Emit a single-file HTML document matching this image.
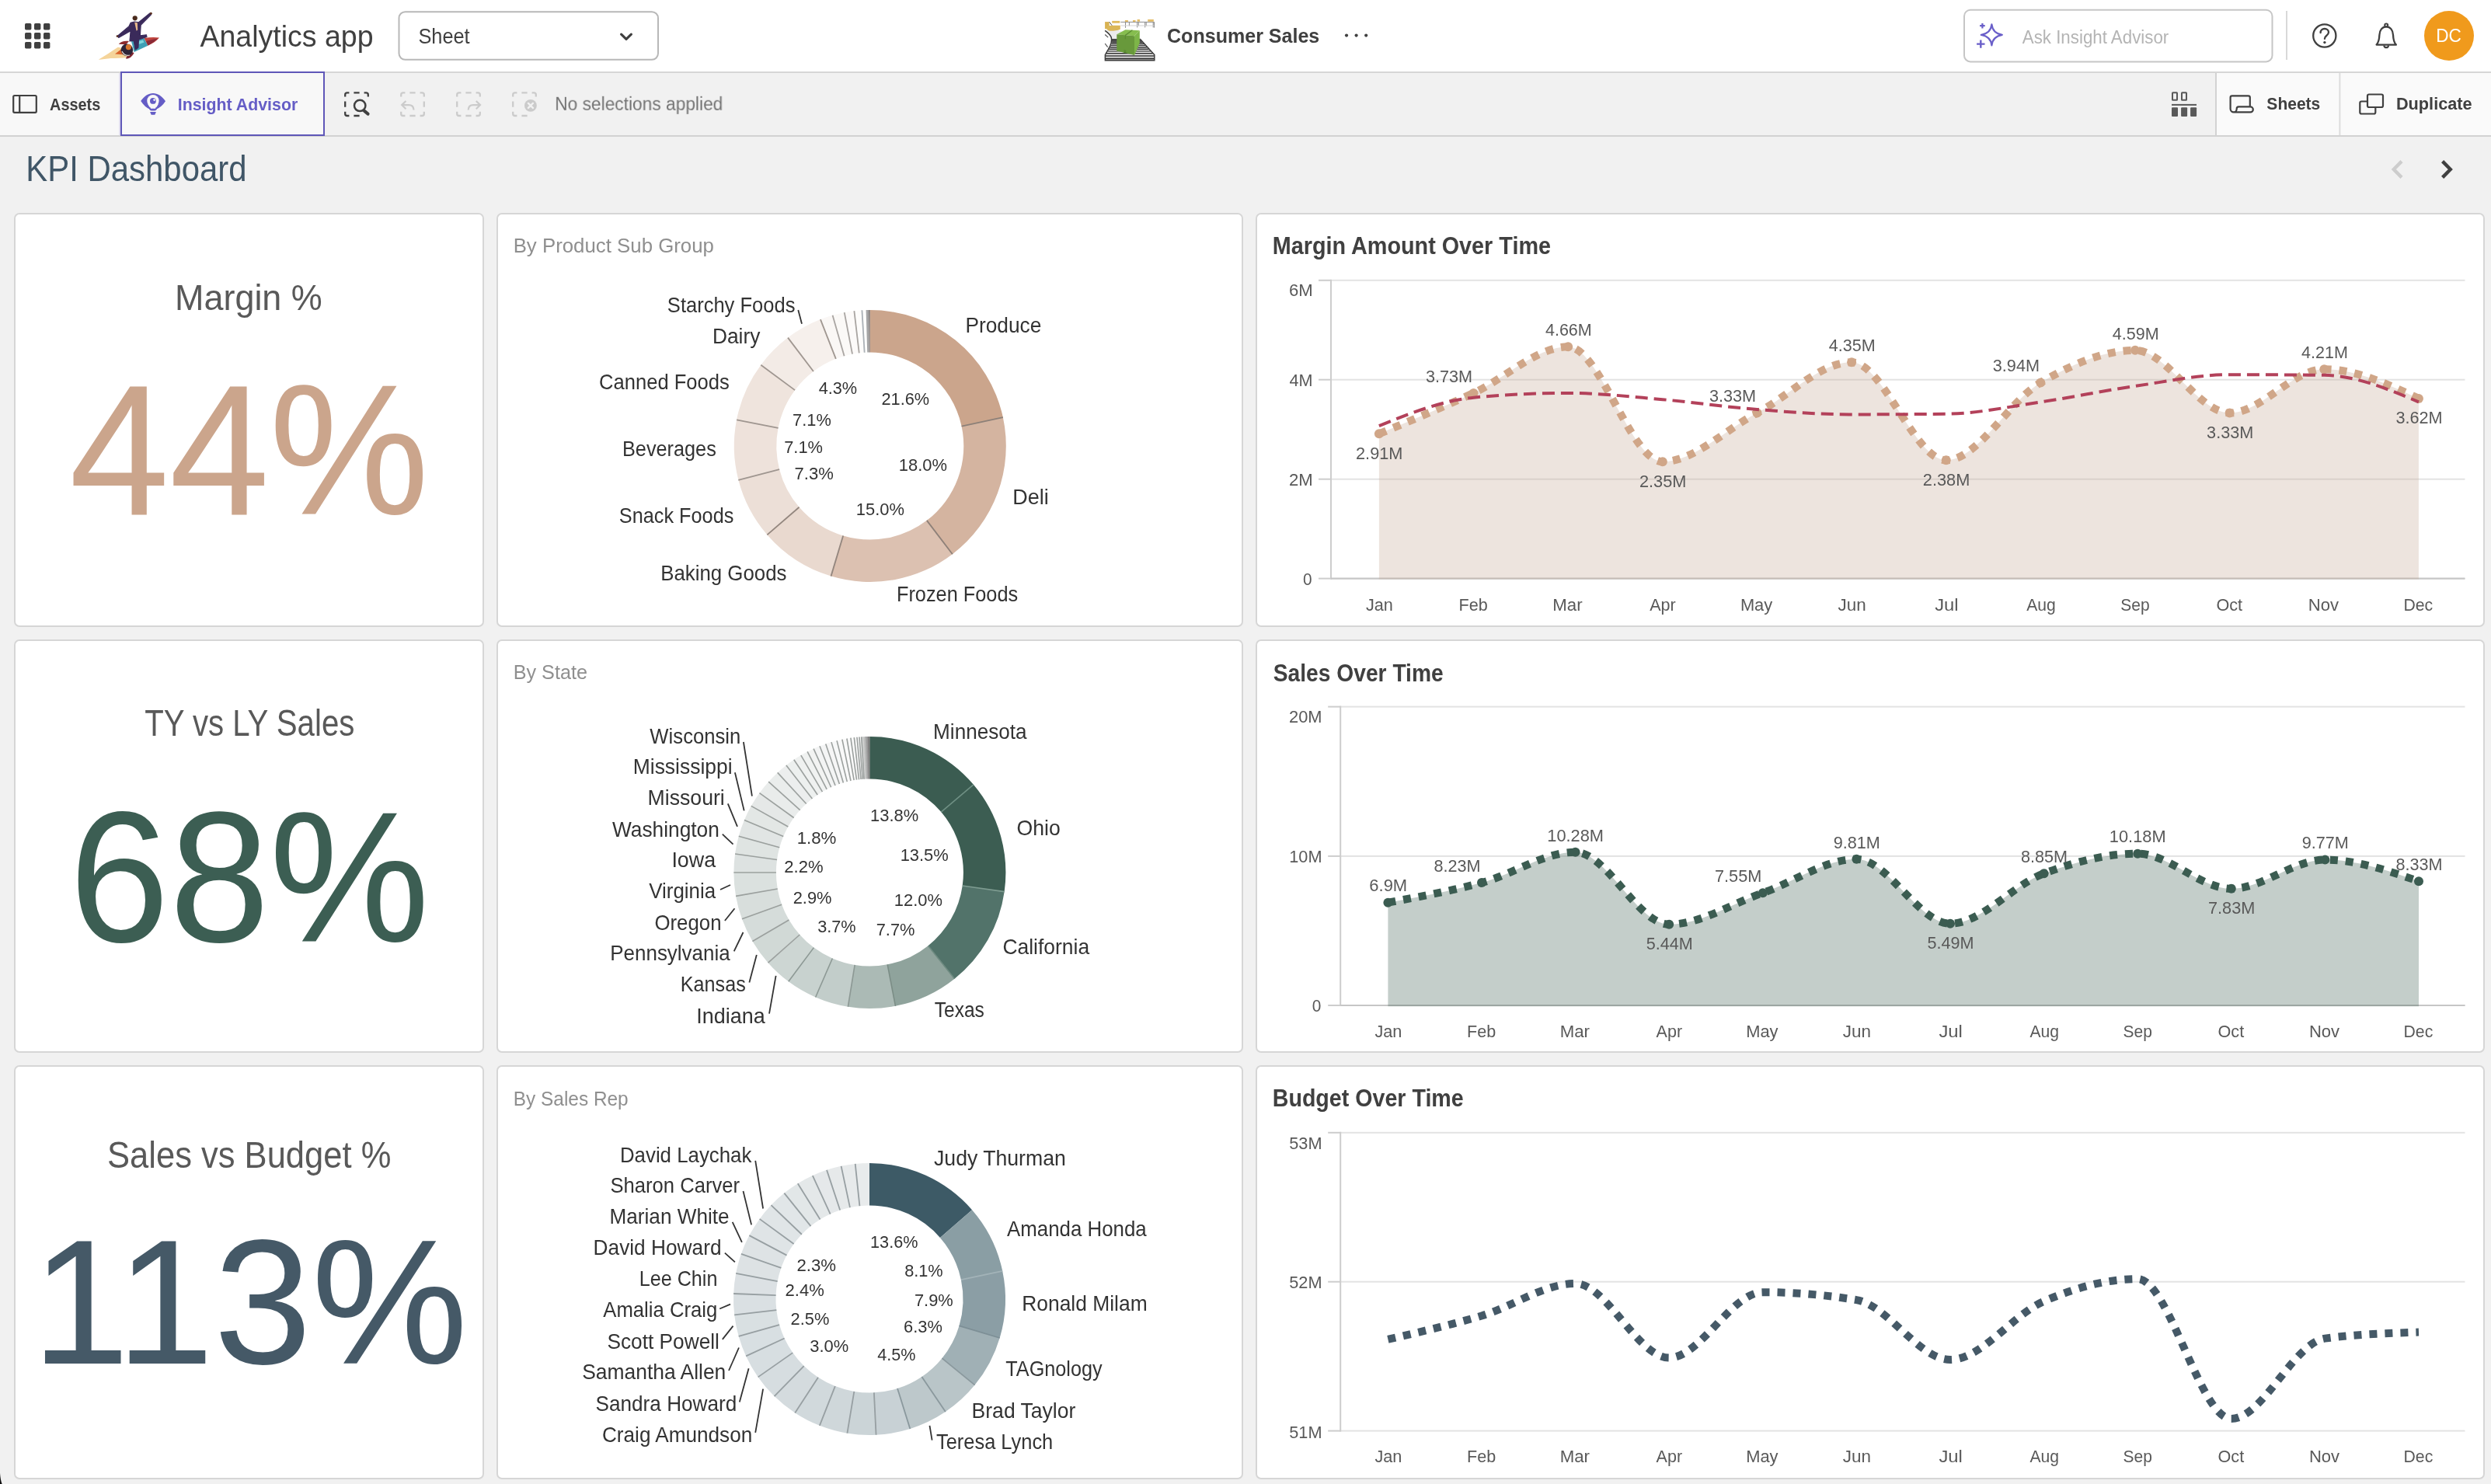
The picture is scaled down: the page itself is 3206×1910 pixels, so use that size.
<!DOCTYPE html>
<html lang="en"><head><meta charset="utf-8"><title>KPI Dashboard - Consumer Sales</title>
<style>
*{box-sizing:border-box;margin:0;padding:0}
html,body{width:3206px;height:1910px;overflow:hidden;background:#f1f1f1;font-family:"Liberation Sans",sans-serif}
#app{position:relative;width:3206px;height:1910px;overflow:hidden}
#hdr{position:absolute;left:0;top:0;width:3206px;height:94px;background:#fff;border-bottom:2px solid #d6d6d6}
#tb{position:absolute;left:0;top:94px;width:3206px;height:82px;background:#f1f1f1;border-bottom:2px solid #d2d2d2}
#ttl{position:absolute;left:0;top:176px;width:3206px;height:99px}
.panel{position:absolute;background:#fff;border:2px solid #d6d6d6;border-radius:7px;overflow:hidden}
svg{position:absolute;left:0;top:0;display:block;overflow:visible;will-change:transform}
.panel svg{left:-2px;top:-2px}
text{font-family:"Liberation Sans",sans-serif;white-space:pre}
</style></head>
<body><div id="app">
<div id="hdr"><svg width="3206" height="94" viewBox="0 0 3206 94">
<rect x="32" y="30" width="8.4" height="8.4" rx="1.6" fill="#404040"/>
<rect x="32" y="42" width="8.4" height="8.4" rx="1.6" fill="#404040"/>
<rect x="32" y="54" width="8.4" height="8.4" rx="1.6" fill="#404040"/>
<rect x="44" y="30" width="8.4" height="8.4" rx="1.6" fill="#404040"/>
<rect x="44" y="42" width="8.4" height="8.4" rx="1.6" fill="#404040"/>
<rect x="44" y="54" width="8.4" height="8.4" rx="1.6" fill="#404040"/>
<rect x="56" y="30" width="8.4" height="8.4" rx="1.6" fill="#404040"/>
<rect x="56" y="42" width="8.4" height="8.4" rx="1.6" fill="#404040"/>
<rect x="56" y="54" width="8.4" height="8.4" rx="1.6" fill="#404040"/>
<g>
<path d="M126.800 76.800c8-5 16-10 25-16l10 2l3 11c-8 1.500-16 1-22 1.200c-6 .500-11 1.300-16 1.800z" fill="#f5d49a"/>
<path d="M148 69.600l8.400-6.600l2 7.200z" fill="#d8612a"/>
<path d="M152.700 56.700c3-3.600 8-4.600 13.300-3.800l-4 4.600c-3-.400-6-.600-9.300-.800z" fill="#8e2a2c"/>
<path d="M161.800 75.500c4 .500 8-2 10.800-7.500l-6-2z" fill="#7e2630"/>
<path d="M168.800 52.400l16.700-3.300l4.900 9.700l-17.800 8.100z" fill="#3f9fb5"/>
<path d="M172 55l12-3.500l1.500 3l-12.500 4.500z" fill="#7fd6dc"/>
<path d="M185.500 49.100c7-1.200 14-1.400 19.500-.500c-3.500 4.200-8.600 7.600-14.600 10.200z" fill="#c0453e"/>
<path d="M188 53c5-1.500 10-2.800 15-3.600c-3.500 3.600-7.600 6.600-12.600 9z" fill="#8a2a36"/>
<circle cx="163.400" cy="64.200" r="7.800" fill="#2e2438"/>
<circle cx="165.400" cy="60.600" r="3.600" fill="#d9762e"/>
<path d="M157 66c2 4 6 6 10 5" stroke="#e8e0da" stroke-width="1.200" fill="none"/>
<circle cx="173.700" cy="23.300" r="3.100" fill="#4a2a1c"/>
<path d="M168 29.400l5-1.400l5.500 .800l14.400-11.800l1.600 1.800l-13.300 13.500l-.800 13.600l8-1.200l.600 2.800l-10.500 3.400l-.600 10.500l-3.800 2.600l-2-11.500l-5.200 .400l1.200-13.200l-15.400 8.800l-1.600-2.200l14.800-12.400z" fill="#3a2a5a" stroke="#3a2a5a" stroke-width="1.100" stroke-linejoin="round"/>
<path d="M173.200 28.800l3.600 .400l.400 9.200l-1.600 1.400z" fill="#e7b88c"/>
<circle cx="194.300" cy="17.200" r="1.500" fill="#5a3020"/>
<circle cx="151" cy="46.600" r="1.400" fill="#5a3020"/>
</g>
<text transform="translate(257.50 60.00) scale(0.9558 1)" font-size="39.24" fill="#404040">Analytics app</text>
<rect x="513.5" y="15.2" width="333.5" height="61.6" rx="8" fill="#fff" stroke="#b8b8b8" stroke-width="2"/>
<text transform="translate(538.46 56.00) scale(0.9377 1)" font-size="27.03" fill="#404040">Sheet</text>
<path d="M799.6 44.2L806 50.4L812.4 44.2" fill="none" stroke="#404040" stroke-width="3.2" stroke-linecap="round" stroke-linejoin="round"/>
<g>
<path d="M1442.300 28.400H1485.600V35.600M1448.500 28.400v7.400M1453.400 28.400v5M1463.700 28.400v7M1465.300 28.400v5M1473.700 28.400v7M1475.200 28.400v5M1484.200 28.400v7" fill="none" stroke="#8a8a8a" stroke-width="1"/>
<path d="M1442.300 33h43" stroke="#d4d4d4" stroke-width="1.200"/>
<path d="M1447.900 25.900h4v2h-4zM1458 25.900h3.500v2h-3.500zM1463.600 25.100h3.500v2.600h-3.500zM1477.200 25.100h7.600v2.600h-7.600z" fill="#e3bc66"/>
<path d="M1422.100 39.300c4 2.600 6.600 5.400 8.100 8.500c1 4 .200 9.200-3.500 15.200c-1.600 2.800-3 5.200-4.300 7.600v7.100h63.400v-7.100l-18.700-20.700l-20-8l-12-5z" fill="#ececec"/>
<path d="M1422.9 72.0H1485.3M1422.8 75.3H1485.4M1422.7 77.2H1485.5M1423.9 68.8H1483.7M1425.6 65.9H1481.2M1427.1 63.2H1478.8M1428.3 60.7H1476.6M1429.4 58.4H1474.5M1430.5 56.3H1472.6M1431.1 54.3H1470.7M1431.0 52.5H1469.0M1430.9 50.8H1467.4" stroke="#333" stroke-width="1.400" fill="none"/>
<path d="M1422.100 39.300c4 2.600 6.600 5.400 8.100 8.500c1 4 .2 9.200-3.500 15.200c-1.600 2.800-3 5.200-4.300 7.600v7.100h63.400v-7.100l-18.700-20.700" fill="none" stroke="#3c3c3c" stroke-width="1.500"/>
<path d="M1422.200 44.500l4 3.600M1422.200 56l3.400 4.600" stroke="#555" stroke-width="1.200"/>
<path d="M1422.100 28.100h5.600v9.100h-5.600z" fill="#d8b252"/>
<path d="M1431.200 26.900h10.100v2.800h-10.100z" fill="#e0bb5e"/>
<path d="M1424.700 33.500c5-.8 11-.8 17.100-.8v5c-4 1.600-9 2.400-14 2.100l-3.100-1.600z" fill="#dbb758"/>
<path d="M1427.700 28.100l3.500 4.700" stroke="#555" stroke-width="1"/>
<path d="M1437.300 44.300l11.100-6.100l18.400 1.100l-6.800 7z" fill="#86bd4f"/>
<path d="M1437.300 44.300l22.700 2v24.800l-22.700-5.600z" fill="#68993b"/>
<path d="M1460 46.300l6.800-7v16.200l-6.800 15.600z" fill="#7db548"/>
<path d="M1457.400 38.800l-9 6.600v4.800" stroke="#5a8a32" stroke-width="1.200" fill="none"/>
<path d="M1446.500 64v4.200h2.800V64.700z" fill="#5a8a32"/>
</g>
<text transform="translate(1502.00 55.30) scale(0.9577 1)" font-size="26.16" fill="#404040" font-weight="700">Consumer Sales</text>
<circle cx="1733.0" cy="45.6" r="2.1" fill="#404040"/>
<circle cx="1745.6" cy="45.6" r="2.1" fill="#404040"/>
<circle cx="1758.2" cy="45.6" r="2.1" fill="#404040"/>
<rect x="2528" y="12.8" width="396.5" height="66.6" rx="8" fill="#fff" stroke="#c6c6c6" stroke-width="2"/>
<g fill="none" stroke="#6a5fc9" stroke-width="2.200" stroke-linejoin="round" stroke-linecap="butt">
<path d="M2563.4 31.4Q2564.6 42.7 2576.8 44.9Q2564.6 47.1 2563.4 58.4Q2562.2 47.1 2549.8 44.9Q2562.2 42.7 2563.4 31.4Z"/>
<path d="M2551.400 30v6.500M2548.100 33.200h6.600"/>
<path d="M2549.300 51.400v10.400M2544.100 56.600h10.400" stroke-width="2.400"/>
</g>
<text transform="translate(2602.80 56.00) scale(0.9360 1)" font-size="23.84" fill="#b4b4b4">Ask Insight Advisor</text>
<rect x="2942" y="14" width="2" height="63" fill="#d9d9d9"/>
<circle cx="2991.8" cy="46" r="14.6" fill="none" stroke="#404040" stroke-width="2.3"/>
<path d="M2986.6 42.2c0-3.2 2.3-5.2 5.2-5.2c3 0 5.2 1.9 5.2 4.6c0 2.3-1.3 3.3-2.8 4.4c-1.5 1.1-2.3 2-2.3 3.9" fill="none" stroke="#404040" stroke-width="2.3" stroke-linecap="round"/>
<circle cx="2991.9" cy="54.6" r="1.7" fill="#404040"/>
<path d="M3058.6 57.6c3-3.4 3.6-7 3.8-12.6c.2-6.2 3.6-10.6 8.8-10.6c5.2 0 8.6 4.400 8.8 10.6c.2 5.600 .8 9.200 3.800 12.600z" fill="none" stroke="#404040" stroke-width="2.3" stroke-linejoin="round"/>
<circle cx="3071.2" cy="32.6" r="2" fill="none" stroke="#404040" stroke-width="2"/>
<path d="M3068.2 58.4c.4 1.800 1.400 2.800 3 2.800c1.600 0 2.600-1 3-2.800" fill="none" stroke="#404040" stroke-width="2.2"/>
<circle cx="3152" cy="46" r="32" fill="#f09a1c"/>
<text transform="translate(3135.19 54.20) scale(0.9500 1)" font-size="23.84" fill="#fff">DC</text>
</svg></div>
<div id="tb"><svg width="3206" height="82" viewBox="0 94 3206 82">
<rect x="0" y="94" width="153" height="80" fill="#f8f8f8"/>
<rect x="153" y="94" width="2" height="80" fill="#dfdcef"/>
<rect x="17.200" y="123" width="29.600" height="21.800" rx="1.500" fill="none" stroke="#404040" stroke-width="2.200"/>
<path d="M25.200 123v22" stroke="#404040" stroke-width="2.200"/>
<text transform="translate(64.00 141.80) scale(0.9024 1)" font-size="22.09" fill="#404040" font-weight="700">Assets</text>
<rect x="156" y="93" width="261" height="81" fill="#f8f8f8" stroke="#5f57b8" stroke-width="2"/>
<g>
<path d="M181.200 130c4.600-6.600 10-10 15.800-10c5.800 0 11.200 3.400 16 10.200c-3.600 5.400-8 9-12.400 10.600l-1.400 .800h-4.400l-1.400-.800c-4.400-1.600-8.600-5.200-12.200-10.800z" fill="#655dc6"/>
<circle cx="196.900" cy="129.800" r="7.700" fill="#f8f8f8"/>
<path d="M190.200 134l3.400 5.800h6.800l3.400-5.800z" fill="#f8f8f8"/>
<path d="M192.200 138.200l1 2.200c.300 .700 .900 1.100 1.700 1.100h4.200c.800 0 1.400-.400 1.700-1.100l1-2.200" fill="none" stroke="#655dc6" stroke-width="2"/>
<circle cx="196.900" cy="129.900" r="3.900" fill="#655dc6"/>
<circle cx="198.600" cy="128.600" r="1.300" fill="#f8f8f8"/>
<path d="M193.100 144.100h7.800l-1.600 3.600h-4.600z" fill="#655dc6"/>
</g>
<text transform="translate(228.81 141.80) scale(0.9660 1)" font-size="22.09" fill="#655dc6" font-weight="700">Insight Advisor</text>
<path d="M444.2 124.6V122.0Q444.2 119.4 446.8 119.4H449.4M468.6 119.4H471.2Q473.8 119.4 473.8 122.0V124.6M449.4 149.0H446.8Q444.2 149.0 444.2 146.4V143.8M455.4 119.4H462.6M455.4 149.0H462.6M444.2 130.6V137.8" fill="none" stroke="#404040" stroke-width="2.300"/>
<circle cx="463.200" cy="135.900" r="7.200" fill="none" stroke="#404040" stroke-width="2.500"/>
<path d="M468.800 142.600l4.800 4" stroke="#404040" stroke-width="4" stroke-linecap="round"/>
<path d="M516.2 124.6V122.0Q516.2 119.4 518.8 119.4H521.4M540.6 119.4H543.2Q545.8 119.4 545.8 122.0V124.6M545.8 143.8V146.4Q545.8 149.0 543.2 149.0H540.6M521.4 149.0H518.8Q516.2 149.0 516.2 146.4V143.8M527.4 119.4H534.6M527.4 149.0H534.6M545.8 130.6V137.8" fill="none" stroke="#cbcbcb" stroke-width="2.300"/>
<path d="M517.600 135.100h8.500c3.800 0 6.200 2.400 6.400 6.400" fill="none" stroke="#cbcbcb" stroke-width="2.200"/><path d="M522.400 130l-5.200 5.100l5.200 5.100" fill="none" stroke="#cbcbcb" stroke-width="2.200"/>
<path d="M588.2 124.6V122.0Q588.2 119.4 590.8 119.4H593.4M612.6 119.4H615.2Q617.8 119.4 617.8 122.0V124.6M617.8 143.8V146.4Q617.8 149.0 615.2 149.0H612.6M593.4 149.0H590.8Q588.2 149.0 588.2 146.4V143.8M599.4 119.4H606.6M599.4 149.0H606.6M588.2 130.6V137.8" fill="none" stroke="#cbcbcb" stroke-width="2.300"/>
<path d="M617.600 135.100h-8.500c-3.800 0-6.200 2.400-6.400 6.400" fill="none" stroke="#cbcbcb" stroke-width="2.200"/><path d="M612.800 130l5.200 5.100l-5.200 5.100" fill="none" stroke="#cbcbcb" stroke-width="2.200"/>
<path d="M660.2 124.6V122.0Q660.2 119.4 662.8 119.4H665.4M684.6 119.4H687.2Q689.8 119.4 689.8 122.0V124.6M665.4 149.0H662.8Q660.2 149.0 660.2 146.4V143.8M671.4 119.4H678.6M671.4 149.0H678.6M660.2 130.6V137.8" fill="none" stroke="#cbcbcb" stroke-width="2.300"/>
<circle cx="682.900" cy="135.900" r="7.900" fill="#cbcbcb"/>
<path d="M679.900 132.900l6 6M685.900 132.900l-6 6" stroke="#f1f1f1" stroke-width="2.400" stroke-linecap="round"/>
<text transform="translate(714.18 141.80) scale(0.9780 1)" font-size="23.26" fill="#737373">No selections applied</text>
<rect x="2796" y="119.200" width="6" height="9.600" rx=".600" fill="none" stroke="#595959" stroke-width="2"/>
<rect x="2808" y="119.200" width="6" height="9.600" rx=".600" fill="none" stroke="#595959" stroke-width="2"/>
<rect x="2795" y="133.900" width="32" height="2" fill="#595959"/>
<rect x="2795.0" y="138.300" width="8" height="11.600" rx="1" fill="#595959"/>
<rect x="2807.1" y="138.300" width="8" height="11.600" rx="1" fill="#595959"/>
<rect x="2819.1" y="138.300" width="8" height="11.600" rx="1" fill="#595959"/>
<rect x="2851" y="94" width="2" height="80" fill="#d2d2d2"/>
<rect x="2853" y="94" width="157.500" height="80" fill="#fafafa"/>
<rect x="3010.500" y="94" width="2" height="80" fill="#dcdcdc"/>
<rect x="3012.500" y="94" width="194" height="80" fill="#fafafa"/>
<path d="M2895.800 137.200V125.400c0-1.200-.900-2.100-2.100-2.100h-21c-1.200 0-2.100 .900-2.100 2.100v14.600c0 2.500 2 4.400 4.400 4.400h21.300c1.900 0 3.500-1.600 3.500-3.500s-1.600-3.500-3.500-3.500h-15.200c-1.500 0-2.400 1-2.400 2.600c0 2.400-1.400 4.400-3.700 4.400" fill="none" stroke="#404040" stroke-width="2.200" stroke-linejoin="round"/>
<text transform="translate(2917.37 141.20) scale(0.9394 1)" font-size="22.38" fill="#404040" font-weight="700">Sheets</text>
<rect x="3037.300" y="130.500" width="20" height="16" rx="2" fill="#fafafa" stroke="#404040" stroke-width="2.200"/>
<rect x="3047" y="121.500" width="20" height="16.500" rx="2" fill="#fafafa" stroke="#404040" stroke-width="2.200"/>
<text transform="translate(3083.89 141.20) scale(0.9706 1)" font-size="22.38" fill="#404040" font-weight="700">Duplicate</text>
</svg></div>
<div id="ttl"><svg width="3206" height="99" viewBox="0 176 3206 99">
<text transform="translate(33.35 232.60) scale(0.9154 1)" font-size="45.78" fill="#405667">KPI Dashboard</text>
<path d="M3091 207.600l-10.200 10.400l10.200 10.400" fill="none" stroke="#cdcdcd" stroke-width="4.400"/>
<path d="M3143.600 207.600l10.200 10.400l-10.200 10.400" fill="none" stroke="#404040" stroke-width="4.400"/>
</svg></div>
<div class="panel" style="left:18px;top:274px;width:605px;height:533px"><svg width="605" height="533" viewBox="18 274 605 533">
<text transform="translate(225.00 398.50) scale(0.9548 1)" font-size="47.09" fill="#595959">Margin %</text>
<text transform="translate(89.17 662.30) scale(0.9644 1)" font-size="240.00" fill="#cba58c">44%</text>
</svg></div>
<div class="panel" style="left:18px;top:823px;width:605px;height:532px"><svg width="605" height="532" viewBox="18 823 605 532">
<text transform="translate(186.20 947.10) scale(0.8480 1)" font-size="47.38" fill="#595959">TY vs LY Sales</text>
<text transform="translate(89.01 1212.40) scale(0.9699 1)" font-size="239.00" fill="#3c5e53">68%</text>
</svg></div>
<div class="panel" style="left:18px;top:1371px;width:605px;height:533px"><svg width="605" height="533" viewBox="18 1371 605 533">
<text transform="translate(138.04 1503.20) scale(0.9188 1)" font-size="47.38" fill="#595959">Sales vs Budget %</text>
<text transform="translate(40.65 1754.70) scale(0.9915 1)" font-size="228.00" fill="#455967">113%</text>
</svg></div>
<div class="panel" style="left:639px;top:274px;width:961px;height:533px"><svg width="961" height="533" viewBox="639 274 961 533">
<text transform="translate(660.63 324.50) scale(0.9872 1)" font-size="26.16" fill="#8f8f8f">By Product Sub Group</text>
<path d="M1119.80 399.00A175 175 0 0 1 1290.85 537.02L1237.58 548.54A120.5 120.5 0 0 0 1119.80 453.50Z" fill="#cba58c"/>
<path d="M1290.85 537.02A175 175 0 0 1 1225.85 713.21L1192.82 669.85A120.5 120.5 0 0 0 1237.58 548.54Z" fill="#d4b4a0"/>
<path d="M1225.85 713.21A175 175 0 0 1 1069.51 741.62L1085.17 689.42A120.5 120.5 0 0 0 1192.82 669.85Z" fill="#dcc1b1"/>
<path d="M1069.51 741.62A175 175 0 0 1 987.33 688.35L1028.58 652.74A120.5 120.5 0 0 0 1085.17 689.42Z" fill="#e9d9cf"/>
<path d="M987.33 688.35A175 175 0 0 1 950.37 617.82L1003.14 604.17A120.5 120.5 0 0 0 1028.58 652.74Z" fill="#ecdfd7"/>
<path d="M950.37 617.82A175 175 0 0 1 948.07 540.31L1001.55 550.80A120.5 120.5 0 0 0 1003.14 604.17Z" fill="#eee2db"/>
<path d="M948.07 540.31A175 175 0 0 1 979.31 469.66L1023.06 502.15A120.5 120.5 0 0 0 1001.55 550.80Z" fill="#efe4dd"/>
<path d="M979.31 469.66A175 175 0 0 1 1014.00 434.61L1046.95 478.02A120.5 120.5 0 0 0 1023.06 502.15Z" fill="#f3ebe6"/>
<path d="M1014.00 434.61A175 175 0 0 1 1055.95 411.07L1075.83 461.81A120.5 120.5 0 0 0 1046.95 478.02Z" fill="#f6f0ec"/>
<path d="M1055.95 411.07A175 175 0 0 1 1071.56 405.78L1086.59 458.17A120.5 120.5 0 0 0 1075.83 461.81Z" fill="#faf7f5"/>
<path d="M1071.56 405.78A175 175 0 0 1 1086.71 402.16L1097.01 455.67A120.5 120.5 0 0 0 1086.59 458.17Z" fill="#fbf9f7"/>
<path d="M1086.71 402.16A175 175 0 0 1 1099.38 400.20L1105.74 454.32A120.5 120.5 0 0 0 1097.01 455.67Z" fill="#fcfaf9"/>
<path d="M1099.38 400.20A175 175 0 0 1 1109.42 399.31L1112.65 453.71A120.5 120.5 0 0 0 1105.74 454.32Z" fill="#fdfcfb"/>
<path d="M1109.42 399.31A175 175 0 0 1 1114.61 399.08L1116.23 453.55A120.5 120.5 0 0 0 1112.65 453.71Z" fill="#fdfdfc"/>
<path d="M1114.61 399.08A175 175 0 0 1 1117.97 399.01L1118.54 453.51A120.5 120.5 0 0 0 1116.23 453.55Z" fill="#a5a5a6"/>
<path d="M1117.97 399.01A175 175 0 0 1 1119.80 399.00L1119.80 453.50A120.5 120.5 0 0 0 1118.54 453.51Z" fill="#857e7b"/>
<path d="M1237.58 548.54L1290.85 537.02" stroke="#8d8078" stroke-width="1.800"/>
<path d="M1192.82 669.85L1225.85 713.21" stroke="#8d8078" stroke-width="1.800"/>
<path d="M1085.17 689.42L1069.51 741.62" stroke="#93867e" stroke-width="1.800"/>
<path d="M1028.58 652.74L987.33 688.35" stroke="#93867e" stroke-width="1.800"/>
<path d="M1003.14 604.17L950.37 617.82" stroke="#9f9690" stroke-width="1.800"/>
<path d="M1001.55 550.80L948.07 540.31" stroke="#9f9690" stroke-width="1.800"/>
<path d="M1023.06 502.15L979.31 469.66" stroke="#9f9690" stroke-width="1.800"/>
<path d="M1046.95 478.02L1014.00 434.61" stroke="#9f9690" stroke-width="1.800"/>
<path d="M1075.83 461.81L1055.95 411.07" stroke="#9f9690" stroke-width="1.800"/>
<path d="M1086.59 458.17L1071.56 405.78" stroke="#a9a5a2" stroke-width="1.800"/>
<path d="M1097.01 455.67L1086.71 402.16" stroke="#a9a5a2" stroke-width="1.800"/>
<path d="M1105.74 454.32L1099.38 400.20" stroke="#a9a5a2" stroke-width="1.800"/>
<path d="M1112.65 453.71L1109.42 399.31" stroke="#aab0b6" stroke-width="1.800"/>
<text transform="translate(1242.40 428.10) scale(0.9727 1)" font-size="27.03" fill="#333333">Produce</text>
<text transform="translate(1303.34 648.80) scale(0.9981 1)" font-size="27.03" fill="#333333">Deli</text>
<text transform="translate(1153.97 774.30) scale(0.9371 1)" font-size="27.03" fill="#333333">Frozen Foods</text>
<text transform="translate(850.23 746.80) scale(0.9558 1)" font-size="27.03" fill="#333333">Baking Goods</text>
<text transform="translate(796.86 672.80) scale(0.9352 1)" font-size="27.03" fill="#333333">Snack Foods</text>
<text transform="translate(800.98 586.70) scale(0.9356 1)" font-size="27.03" fill="#333333">Beverages</text>
<text transform="translate(771.12 500.50) scale(0.9460 1)" font-size="27.03" fill="#333333">Canned Foods</text>
<text transform="translate(916.89 441.90) scale(0.9760 1)" font-size="27.03" fill="#333333">Dairy</text>
<text transform="translate(858.85 401.80) scale(0.9449 1)" font-size="27.03" fill="#333333">Starchy Foods</text>
<text transform="translate(1134.51 520.80) scale(0.9469 1)" font-size="22.97" fill="#333333">21.6%</text>
<text transform="translate(1156.75 605.60) scale(0.9556 1)" font-size="22.97" fill="#333333">18.0%</text>
<text transform="translate(1101.86 663.00) scale(0.9540 1)" font-size="22.97" fill="#333333">15.0%</text>
<text transform="translate(1022.50 617.00) scale(0.9602 1)" font-size="22.97" fill="#333333">7.3%</text>
<text transform="translate(1009.21 582.80) scale(0.9502 1)" font-size="22.97" fill="#333333">7.1%</text>
<text transform="translate(1020.11 548.00) scale(0.9483 1)" font-size="22.97" fill="#333333">7.1%</text>
<text transform="translate(1053.67 507.30) scale(0.9453 1)" font-size="22.97" fill="#333333">4.3%</text>
<path d="M1027.3 399.0L1032.0 416.7" stroke="#333" stroke-width="1.800"/>
</svg></div>
<div class="panel" style="left:639px;top:823px;width:961px;height:532px"><svg width="961" height="532" viewBox="639 823 961 532">
<text transform="translate(660.68 873.50) scale(0.9639 1)" font-size="26.16" fill="#8f8f8f">By State</text>
<path d="M1119.40 948.00A175 175 0 0 1 1252.87 1009.81L1211.30 1045.06A120.5 120.5 0 0 0 1119.40 1002.50Z" fill="#3b5c51"/>
<path d="M1252.87 1009.81A175 175 0 0 1 1292.65 1147.66L1238.70 1139.98A120.5 120.5 0 0 0 1211.30 1045.06Z" fill="#3c5d52"/>
<path d="M1292.65 1147.66A175 175 0 0 1 1228.58 1259.77L1194.58 1217.17A120.5 120.5 0 0 0 1238.70 1139.98Z" fill="#52736a"/>
<path d="M1228.58 1259.77A175 175 0 0 1 1152.49 1294.84L1142.19 1241.33A120.5 120.5 0 0 0 1194.58 1217.17Z" fill="#8fa39c"/>
<path d="M1152.49 1294.84A175 175 0 0 1 1091.42 1295.75L1100.13 1241.95A120.5 120.5 0 0 0 1142.19 1241.33Z" fill="#abbab5"/>
<path d="M1091.42 1295.75A175 175 0 0 1 1049.62 1283.49L1071.35 1233.51A120.5 120.5 0 0 0 1100.13 1241.95Z" fill="#c2cdca"/>
<path d="M1049.62 1283.49A175 175 0 0 1 1014.82 1263.31L1047.39 1219.61A120.5 120.5 0 0 0 1071.35 1233.51Z" fill="#c8d2cf"/>
<path d="M1014.82 1263.31A175 175 0 0 1 988.54 1239.19L1029.29 1203.00A120.5 120.5 0 0 0 1047.39 1219.61Z" fill="#cdd6d3"/>
<path d="M988.54 1239.19A175 175 0 0 1 968.46 1211.56L1015.47 1183.98A120.5 120.5 0 0 0 1029.29 1203.00Z" fill="#d1d9d6"/>
<path d="M968.46 1211.56A175 175 0 0 1 954.95 1182.85L1006.17 1164.21A120.5 120.5 0 0 0 1015.47 1183.98Z" fill="#d5dcda"/>
<path d="M954.95 1182.85A175 175 0 0 1 947.06 1153.39L1000.73 1143.92A120.5 120.5 0 0 0 1006.17 1164.21Z" fill="#d8dedc"/>
<path d="M947.06 1153.39A175 175 0 0 1 944.40 1123.00L998.90 1123.00A120.5 120.5 0 0 0 1000.73 1143.92Z" fill="#dbe1df"/>
<path d="M944.40 1123.00A175 175 0 0 1 946.06 1098.95L1000.04 1106.44A120.5 120.5 0 0 0 998.90 1123.00Z" fill="#dde2e1"/>
<path d="M946.06 1098.95A175 175 0 0 1 950.76 1076.23L1003.28 1090.80A120.5 120.5 0 0 0 1000.04 1106.44Z" fill="#dfe4e2"/>
<path d="M950.76 1076.23A175 175 0 0 1 957.96 1055.47L1008.23 1076.50A120.5 120.5 0 0 0 1003.28 1090.80Z" fill="#e1e5e4"/>
<path d="M957.96 1055.47A175 175 0 0 1 966.79 1037.36L1014.32 1064.03A120.5 120.5 0 0 0 1008.23 1076.50Z" fill="#e3e7e5"/>
<path d="M966.79 1037.36A175 175 0 0 1 977.46 1020.63L1021.67 1052.51A120.5 120.5 0 0 0 1014.32 1064.03Z" fill="#e5e8e7"/>
<path d="M977.46 1020.63A175 175 0 0 1 989.15 1006.13L1029.71 1042.53A120.5 120.5 0 0 0 1021.67 1052.51Z" fill="#e9eceb"/>
<path d="M989.15 1006.13A175 175 0 0 1 1000.72 994.39L1037.68 1034.44A120.5 120.5 0 0 0 1029.71 1042.53Z" fill="#eaedec"/>
<path d="M1000.72 994.39A175 175 0 0 1 1011.90 984.91L1045.38 1027.92A120.5 120.5 0 0 0 1037.68 1034.44Z" fill="#eceeee"/>
<path d="M1011.90 984.91A175 175 0 0 1 1021.79 977.75L1052.19 1022.98A120.5 120.5 0 0 0 1045.38 1027.92Z" fill="#edf0ef"/>
<path d="M1021.79 977.75A175 175 0 0 1 1030.84 972.06L1058.42 1019.07A120.5 120.5 0 0 0 1052.19 1022.98Z" fill="#eff1f0"/>
<path d="M1030.84 972.06A175 175 0 0 1 1039.14 967.49L1064.13 1015.92A120.5 120.5 0 0 0 1058.42 1019.07Z" fill="#f0f2f1"/>
<path d="M1039.14 967.49A175 175 0 0 1 1047.11 963.63L1069.62 1013.26A120.5 120.5 0 0 0 1064.13 1015.92Z" fill="#f2f3f2"/>
<path d="M1047.11 963.63A175 175 0 0 1 1054.98 960.29L1075.04 1010.96A120.5 120.5 0 0 0 1069.62 1013.26Z" fill="#f3f4f4"/>
<path d="M1054.98 960.29A175 175 0 0 1 1062.71 957.44L1080.37 1009.00A120.5 120.5 0 0 0 1075.04 1010.96Z" fill="#f4f5f5"/>
<path d="M1062.71 957.44A175 175 0 0 1 1069.99 955.12L1085.38 1007.40A120.5 120.5 0 0 0 1080.37 1009.00Z" fill="#f6f6f6"/>
<path d="M1069.99 955.12A175 175 0 0 1 1077.06 953.20L1090.25 1006.08A120.5 120.5 0 0 0 1085.38 1007.40Z" fill="#f7f8f8"/>
<path d="M1077.06 953.20A175 175 0 0 1 1083.91 951.64L1094.96 1005.00A120.5 120.5 0 0 0 1090.25 1006.08Z" fill="#f9f9f9"/>
<path d="M1083.91 951.64A175 175 0 0 1 1089.91 950.50L1099.10 1004.22A120.5 120.5 0 0 0 1094.96 1005.00Z" fill="#fafafa"/>
<path d="M1089.91 950.50A175 175 0 0 1 1094.89 949.72L1102.53 1003.69A120.5 120.5 0 0 0 1099.10 1004.22Z" fill="#fafafa"/>
<path d="M1094.89 949.72A175 175 0 0 1 1099.29 949.16L1105.55 1003.30A120.5 120.5 0 0 0 1102.53 1003.69Z" fill="#fafafa"/>
<path d="M1099.29 949.16A175 175 0 0 1 1102.93 948.78L1108.06 1003.03A120.5 120.5 0 0 0 1105.55 1003.30Z" fill="#fafafa"/>
<path d="M1102.93 948.78A175 175 0 0 1 1105.97 948.52L1110.16 1002.86A120.5 120.5 0 0 0 1108.06 1003.03Z" fill="#fafafa"/>
<path d="M1105.97 948.52A175 175 0 0 1 1108.72 948.33L1112.04 1002.72A120.5 120.5 0 0 0 1110.16 1002.86Z" fill="#fafafa"/>
<path d="M1108.72 948.33A175 175 0 0 1 1109.48 948.28L1112.57 1002.69A120.5 120.5 0 0 0 1112.04 1002.72Z" fill="#cdcfce"/>
<path d="M1109.48 948.28A175 175 0 0 1 1110.24 948.24L1113.09 1002.67A120.5 120.5 0 0 0 1112.57 1002.69Z" fill="#c8cac9"/>
<path d="M1110.24 948.24A175 175 0 0 1 1111.00 948.20L1113.62 1002.64A120.5 120.5 0 0 0 1113.09 1002.67Z" fill="#c2c4c3"/>
<path d="M1111.00 948.20A175 175 0 0 1 1111.77 948.17L1114.14 1002.61A120.5 120.5 0 0 0 1113.62 1002.64Z" fill="#babcbb"/>
<path d="M1111.77 948.17A175 175 0 0 1 1112.53 948.13L1114.67 1002.59A120.5 120.5 0 0 0 1114.14 1002.61Z" fill="#b2b3b2"/>
<path d="M1112.53 948.13A175 175 0 0 1 1113.29 948.11L1115.19 1002.57A120.5 120.5 0 0 0 1114.67 1002.59Z" fill="#a8aaa9"/>
<path d="M1113.29 948.11A175 175 0 0 1 1114.06 948.08L1115.72 1002.56A120.5 120.5 0 0 0 1115.19 1002.57Z" fill="#9fa09f"/>
<path d="M1114.06 948.08A175 175 0 0 1 1114.82 948.06L1116.25 1002.54A120.5 120.5 0 0 0 1115.72 1002.56Z" fill="#949595"/>
<path d="M1114.82 948.06A175 175 0 0 1 1115.58 948.04L1116.77 1002.53A120.5 120.5 0 0 0 1116.25 1002.54Z" fill="#898a8a"/>
<path d="M1115.58 948.04A175 175 0 0 1 1116.35 948.03L1117.30 1002.52A120.5 120.5 0 0 0 1116.77 1002.53Z" fill="#7e7f7f"/>
<path d="M1116.35 948.03A175 175 0 0 1 1117.11 948.01L1117.82 1002.51A120.5 120.5 0 0 0 1117.30 1002.52Z" fill="#737373"/>
<path d="M1117.11 948.01A175 175 0 0 1 1117.87 948.01L1118.35 1002.50A120.5 120.5 0 0 0 1117.82 1002.51Z" fill="#676767"/>
<path d="M1117.87 948.01A175 175 0 0 1 1118.64 948.00L1118.87 1002.50A120.5 120.5 0 0 0 1118.35 1002.50Z" fill="#5b5b5b"/>
<path d="M1118.64 948.00A175 175 0 0 1 1119.40 948.00L1119.40 1002.50A120.5 120.5 0 0 0 1118.87 1002.50Z" fill="#4e4e4e"/>
<path d="M1211.30 1045.06L1252.87 1009.81" stroke="#6e8f83" stroke-width="1.600"/>
<path d="M1238.70 1139.98L1292.65 1147.66" stroke="#7d9b90" stroke-width="1.600"/>
<path d="M1194.58 1217.17L1228.58 1259.77" stroke="#6d8a80" stroke-width="1.600"/>
<path d="M1142.19 1241.33L1152.49 1294.84" stroke="#7b8d86" stroke-width="1.600"/>
<path d="M1100.13 1241.95L1091.42 1295.75" stroke="#8c9894" stroke-width="1.600"/>
<path d="M1071.35 1233.51L1049.62 1283.49" stroke="#8c9894" stroke-width="1.600"/>
<path d="M1047.39 1219.61L1014.82 1263.31" stroke="#8c9894" stroke-width="1.600"/>
<path d="M1029.29 1203.00L988.54 1239.19" stroke="#9ba09e" stroke-width="1.600"/>
<path d="M1015.47 1183.98L968.46 1211.56" stroke="#9ba09e" stroke-width="1.600"/>
<path d="M1006.17 1164.21L954.95 1182.85" stroke="#9ba09e" stroke-width="1.600"/>
<path d="M1000.73 1143.92L947.06 1153.39" stroke="#9ba09e" stroke-width="1.600"/>
<path d="M998.90 1123.00L944.40 1123.00" stroke="#9ba09e" stroke-width="1.600"/>
<path d="M1000.04 1106.44L946.06 1098.95" stroke="#9ba09e" stroke-width="1.600"/>
<path d="M1003.28 1090.80L950.76 1076.23" stroke="#9ba09e" stroke-width="1.600"/>
<path d="M1008.23 1076.50L957.96 1055.47" stroke="#9ba09e" stroke-width="1.600"/>
<path d="M1014.32 1064.03L966.79 1037.36" stroke="#9ba09e" stroke-width="1.600"/>
<path d="M1021.67 1052.51L977.46 1020.63" stroke="#9ba09e" stroke-width="1.600"/>
<path d="M1029.71 1042.53L989.15 1006.13" stroke="#9ba09e" stroke-width="1.600"/>
<path d="M1037.68 1034.44L1000.72 994.39" stroke="#9ba09e" stroke-width="1.600"/>
<path d="M1045.38 1027.92L1011.90 984.91" stroke="#9ba09e" stroke-width="1.600"/>
<path d="M1052.19 1022.98L1021.79 977.75" stroke="#9ba09e" stroke-width="1.600"/>
<path d="M1058.42 1019.07L1030.84 972.06" stroke="#9ba09e" stroke-width="1.600"/>
<path d="M1064.13 1015.92L1039.14 967.49" stroke="#9ba09e" stroke-width="1.600"/>
<path d="M1069.62 1013.26L1047.11 963.63" stroke="#9ba09e" stroke-width="1.600"/>
<path d="M1075.04 1010.96L1054.98 960.29" stroke="#9ba09e" stroke-width="1.600"/>
<path d="M1080.37 1009.00L1062.71 957.44" stroke="#9ba09e" stroke-width="1.600"/>
<path d="M1085.38 1007.40L1069.99 955.12" stroke="#9ba09e" stroke-width="1.600"/>
<path d="M1090.25 1006.08L1077.06 953.20" stroke="#9ba09e" stroke-width="1.600"/>
<path d="M1094.96 1005.00L1083.91 951.64" stroke="#9ba09e" stroke-width="1.600"/>
<path d="M1099.10 1004.22L1089.91 950.50" stroke="#9ba09e" stroke-width="1.600"/>
<path d="M1102.53 1003.69L1094.89 949.72" stroke="#9ba09e" stroke-width="1.600"/>
<path d="M1105.55 1003.30L1099.29 949.16" stroke="#9ba09e" stroke-width="1.600"/>
<path d="M1108.06 1003.03L1102.93 948.78" stroke="#9ba09e" stroke-width="1.600"/>
<path d="M1110.16 1002.86L1105.97 948.52" stroke="#9ba09e" stroke-width="1.600"/>
<path d="M1112.04 1002.72L1108.72 948.33" stroke="#9ba09e" stroke-width="1.600"/>
<text transform="translate(1201.11 951.00) scale(0.9657 1)" font-size="27.03" fill="#333333">Minnesota</text>
<text transform="translate(1308.60 1075.00) scale(0.9846 1)" font-size="27.03" fill="#333333">Ohio</text>
<text transform="translate(1290.38 1228.00) scale(0.9790 1)" font-size="27.03" fill="#333333">California</text>
<text transform="translate(1202.71 1309.00) scale(0.9092 1)" font-size="27.03" fill="#333333">Texas</text>
<text transform="translate(896.27 1316.90) scale(0.9984 1)" font-size="27.03" fill="#333333">Indiana</text>
<text transform="translate(875.79 1276.30) scale(0.9316 1)" font-size="27.03" fill="#333333">Kansas</text>
<text transform="translate(785.32 1236.20) scale(0.9599 1)" font-size="27.03" fill="#333333">Pennsylvania</text>
<text transform="translate(842.44 1196.50) scale(0.9551 1)" font-size="27.03" fill="#333333">Oregon</text>
<text transform="translate(835.27 1156.30) scale(0.9577 1)" font-size="27.03" fill="#333333">Virginia</text>
<text transform="translate(864.38 1116.20) scale(0.9943 1)" font-size="27.03" fill="#333333">Iowa</text>
<text transform="translate(787.97 1076.50) scale(0.9726 1)" font-size="27.03" fill="#333333">Washington</text>
<text transform="translate(833.57 1036.40) scale(0.9860 1)" font-size="27.03" fill="#333333">Missouri</text>
<text transform="translate(814.78 996.20) scale(0.9782 1)" font-size="27.03" fill="#333333">Mississippi</text>
<text transform="translate(836.37 956.50) scale(0.9499 1)" font-size="27.03" fill="#333333">Wisconsin</text>
<text transform="translate(1120.05 1057.20) scale(0.9556 1)" font-size="22.97" fill="#333333">13.8%</text>
<text transform="translate(1158.66 1108.40) scale(0.9540 1)" font-size="22.97" fill="#333333">13.5%</text>
<text transform="translate(1150.75 1166.20) scale(0.9556 1)" font-size="22.97" fill="#333333">12.0%</text>
<text transform="translate(1127.71 1204.00) scale(0.9522 1)" font-size="22.97" fill="#333333">7.7%</text>
<text transform="translate(1052.14 1200.00) scale(0.9458 1)" font-size="22.97" fill="#333333">3.7%</text>
<text transform="translate(1020.71 1163.40) scale(0.9522 1)" font-size="22.97" fill="#333333">2.9%</text>
<text transform="translate(1009.30 1123.30) scale(0.9602 1)" font-size="22.97" fill="#333333">2.2%</text>
<text transform="translate(1025.63 1086.30) scale(0.9712 1)" font-size="22.97" fill="#333333">1.8%</text>
<path d="M990.0 1304.7L998.6 1255.9" stroke="#333" stroke-width="1.800"/>
<path d="M964.4 1264.5L973.8 1229.1" stroke="#333" stroke-width="1.800"/>
<path d="M944.7 1224.4L956.5 1200.0" stroke="#333" stroke-width="1.800"/>
<path d="M932.9 1185.0L945.5 1169.3" stroke="#333" stroke-width="1.800"/>
<path d="M927.0 1145.0L940.0 1139.0" stroke="#333" stroke-width="1.800"/>
<path d="M929.8 1073.7L943.5 1086.7" stroke="#333" stroke-width="1.800"/>
<path d="M936.8 1034.4L949.0 1063.9" stroke="#333" stroke-width="1.800"/>
<path d="M945.9 994.3L957.7 1043.4" stroke="#333" stroke-width="1.800"/>
<path d="M956.9 955.0L967.9 1024.6" stroke="#333" stroke-width="1.800"/>
</svg></div>
<div class="panel" style="left:639px;top:1371px;width:961px;height:533px"><svg width="961" height="533" viewBox="639 1371 961 533">
<text transform="translate(660.75 1422.50) scale(0.9337 1)" font-size="26.16" fill="#8f8f8f">By Sales Rep</text>
<path d="M1119.00 1497.00A175 175 0 0 1 1251.07 1557.19L1209.94 1592.94A120.5 120.5 0 0 0 1119.00 1551.50Z" fill="#3d5a66"/>
<path d="M1251.07 1557.19A175 175 0 0 1 1290.24 1635.91L1236.91 1647.15A120.5 120.5 0 0 0 1209.94 1592.94Z" fill="#8a9ea4"/>
<path d="M1290.24 1635.91A175 175 0 0 1 1286.71 1722.00L1234.48 1706.43A120.5 120.5 0 0 0 1236.91 1647.15Z" fill="#8b9ea5"/>
<path d="M1286.71 1722.00A175 175 0 0 1 1254.62 1782.61L1212.38 1748.16A120.5 120.5 0 0 0 1234.48 1706.43Z" fill="#a0b0b5"/>
<path d="M1254.62 1782.61A175 175 0 0 1 1216.86 1817.08L1186.38 1771.90A120.5 120.5 0 0 0 1212.38 1748.16Z" fill="#b9c5c8"/>
<path d="M1216.86 1817.08A175 175 0 0 1 1171.33 1838.99L1155.03 1786.99A120.5 120.5 0 0 0 1186.38 1771.90Z" fill="#bdc8cb"/>
<path d="M1171.33 1838.99A175 175 0 0 1 1127.55 1846.79L1124.89 1792.36A120.5 120.5 0 0 0 1155.03 1786.99Z" fill="#c8d1d5"/>
<path d="M1127.55 1846.79A175 175 0 0 1 1090.42 1844.65L1099.32 1790.88A120.5 120.5 0 0 0 1124.89 1792.36Z" fill="#cbd4d7"/>
<path d="M1090.42 1844.65A175 175 0 0 1 1054.86 1834.82L1074.84 1784.12A120.5 120.5 0 0 0 1099.32 1790.88Z" fill="#cfd7da"/>
<path d="M1054.86 1834.82A175 175 0 0 1 1023.18 1818.43L1053.02 1772.83A120.5 120.5 0 0 0 1074.84 1784.12Z" fill="#d1d9dc"/>
<path d="M1023.18 1818.43A175 175 0 0 1 996.56 1797.03L1034.69 1758.09A120.5 120.5 0 0 0 1053.02 1772.83Z" fill="#d4dbde"/>
<path d="M996.56 1797.03A175 175 0 0 1 975.65 1772.38L1020.29 1741.12A120.5 120.5 0 0 0 1034.69 1758.09Z" fill="#d6dde0"/>
<path d="M975.65 1772.38A175 175 0 0 1 960.14 1745.40L1009.61 1722.54A120.5 120.5 0 0 0 1020.29 1741.12Z" fill="#d7dee1"/>
<path d="M960.14 1745.40A175 175 0 0 1 950.70 1719.94L1003.11 1705.01A120.5 120.5 0 0 0 1009.61 1722.54Z" fill="#d8dfe2"/>
<path d="M950.70 1719.94A175 175 0 0 1 945.20 1692.42L999.32 1686.06A120.5 120.5 0 0 0 1003.11 1705.01Z" fill="#d9e0e2"/>
<path d="M945.20 1692.42A175 175 0 0 1 944.14 1664.98L998.60 1667.16A120.5 120.5 0 0 0 999.32 1686.06Z" fill="#dae0e3"/>
<path d="M944.14 1664.98A175 175 0 0 1 947.16 1638.91L1000.67 1649.21A120.5 120.5 0 0 0 998.60 1667.16Z" fill="#dce1e4"/>
<path d="M947.16 1638.91A175 175 0 0 1 953.94 1613.87L1005.34 1631.97A120.5 120.5 0 0 0 1000.67 1649.21Z" fill="#dde2e4"/>
<path d="M953.94 1613.87A175 175 0 0 1 964.34 1590.11L1012.51 1615.61A120.5 120.5 0 0 0 1005.34 1631.97Z" fill="#dee3e5"/>
<path d="M964.34 1590.11A175 175 0 0 1 977.60 1568.89L1021.64 1601.00A120.5 120.5 0 0 0 1012.51 1615.61Z" fill="#dfe4e6"/>
<path d="M977.60 1568.89A175 175 0 0 1 992.48 1551.10L1031.88 1588.75A120.5 120.5 0 0 0 1021.64 1601.00Z" fill="#e0e5e7"/>
<path d="M992.48 1551.10A175 175 0 0 1 1009.34 1535.62L1043.49 1578.09A120.5 120.5 0 0 0 1031.88 1588.75Z" fill="#e1e6e8"/>
<path d="M1009.34 1535.62A175 175 0 0 1 1026.78 1523.27L1055.50 1569.59A120.5 120.5 0 0 0 1043.49 1578.09Z" fill="#e2e7e8"/>
<path d="M1026.78 1523.27A175 175 0 0 1 1045.87 1513.01L1068.65 1562.52A120.5 120.5 0 0 0 1055.50 1569.59Z" fill="#e4e8e9"/>
<path d="M1045.87 1513.01A175 175 0 0 1 1064.05 1505.85L1081.16 1557.59A120.5 120.5 0 0 0 1068.65 1562.52Z" fill="#e5e8ea"/>
<path d="M1064.05 1505.85A175 175 0 0 1 1082.62 1500.82L1093.95 1554.13A120.5 120.5 0 0 0 1081.16 1557.59Z" fill="#e6e9ea"/>
<path d="M1082.62 1500.82A175 175 0 0 1 1100.71 1497.96L1106.40 1552.16A120.5 120.5 0 0 0 1093.95 1554.13Z" fill="#e7eaeb"/>
<path d="M1100.71 1497.96A175 175 0 0 1 1119.00 1497.00L1119.00 1551.50A120.5 120.5 0 0 0 1106.40 1552.16Z" fill="#e8ebec"/>
<path d="M1236.91 1647.15L1290.24 1635.91" stroke="#a3b3b8" stroke-width="1.800"/>
<path d="M1234.48 1706.43L1286.71 1722.00" stroke="#7d8f96" stroke-width="1.800"/>
<path d="M1212.38 1748.16L1254.62 1782.61" stroke="#8a989d" stroke-width="1.800"/>
<path d="M1186.38 1771.90L1216.86 1817.08" stroke="#8a989d" stroke-width="1.800"/>
<path d="M1155.03 1786.99L1171.33 1838.99" stroke="#8a989d" stroke-width="1.800"/>
<path d="M1124.89 1792.36L1127.55 1846.79" stroke="#979fa2" stroke-width="1.800"/>
<path d="M1099.32 1790.88L1090.42 1844.65" stroke="#979fa2" stroke-width="1.800"/>
<path d="M1074.84 1784.12L1054.86 1834.82" stroke="#979fa2" stroke-width="1.800"/>
<path d="M1053.02 1772.83L1023.18 1818.43" stroke="#979fa2" stroke-width="1.800"/>
<path d="M1034.69 1758.09L996.56 1797.03" stroke="#979fa2" stroke-width="1.800"/>
<path d="M1020.29 1741.12L975.65 1772.38" stroke="#979fa2" stroke-width="1.800"/>
<path d="M1009.61 1722.54L960.14 1745.40" stroke="#979fa2" stroke-width="1.800"/>
<path d="M1003.11 1705.01L950.70 1719.94" stroke="#979fa2" stroke-width="1.800"/>
<path d="M999.32 1686.06L945.20 1692.42" stroke="#979fa2" stroke-width="1.800"/>
<path d="M998.60 1667.16L944.14 1664.98" stroke="#979fa2" stroke-width="1.800"/>
<path d="M1000.67 1649.21L947.16 1638.91" stroke="#979fa2" stroke-width="1.800"/>
<path d="M1005.34 1631.97L953.94 1613.87" stroke="#979fa2" stroke-width="1.800"/>
<path d="M1012.51 1615.61L964.34 1590.11" stroke="#979fa2" stroke-width="1.800"/>
<path d="M1021.64 1601.00L977.60 1568.89" stroke="#979fa2" stroke-width="1.800"/>
<path d="M1031.88 1588.75L992.48 1551.10" stroke="#979fa2" stroke-width="1.800"/>
<path d="M1043.49 1578.09L1009.34 1535.62" stroke="#979fa2" stroke-width="1.800"/>
<path d="M1055.50 1569.59L1026.78 1523.27" stroke="#979fa2" stroke-width="1.800"/>
<path d="M1068.65 1562.52L1045.87 1513.01" stroke="#979fa2" stroke-width="1.800"/>
<path d="M1081.16 1557.59L1064.05 1505.85" stroke="#979fa2" stroke-width="1.800"/>
<path d="M1093.95 1554.13L1082.62 1500.82" stroke="#979fa2" stroke-width="1.800"/>
<path d="M1106.40 1552.16L1100.71 1497.96" stroke="#979fa2" stroke-width="1.800"/>
<text transform="translate(1202.00 1499.70) scale(0.9864 1)" font-size="27.03" fill="#333333">Judy Thurman</text>
<text transform="translate(1296.00 1590.90) scale(0.9569 1)" font-size="27.03" fill="#333333">Amanda Honda</text>
<text transform="translate(1315.19 1686.50) scale(0.9771 1)" font-size="27.03" fill="#333333">Ronald Milam</text>
<text transform="translate(1294.30 1771.10) scale(0.9334 1)" font-size="27.03" fill="#333333">TAGnology</text>
<text transform="translate(1250.57 1825.00) scale(0.9829 1)" font-size="27.03" fill="#333333">Brad Taylor</text>
<text transform="translate(1204.99 1864.70) scale(0.9409 1)" font-size="27.03" fill="#333333">Teresa Lynch</text>
<text transform="translate(774.99 1855.70) scale(0.9674 1)" font-size="27.03" fill="#333333">Craig Amundson</text>
<text transform="translate(766.52 1815.50) scale(0.9680 1)" font-size="27.03" fill="#333333">Sandra Howard</text>
<text transform="translate(749.21 1775.00) scale(0.9783 1)" font-size="27.03" fill="#333333">Samantha Allen</text>
<text transform="translate(781.42 1735.70) scale(0.9724 1)" font-size="27.03" fill="#333333">Scott Powell</text>
<text transform="translate(776.30 1695.20) scale(0.9507 1)" font-size="27.03" fill="#333333">Amalia Craig</text>
<text transform="translate(822.69 1655.00) scale(0.9314 1)" font-size="27.03" fill="#333333">Lee Chin</text>
<text transform="translate(763.60 1614.90) scale(0.9717 1)" font-size="27.03" fill="#333333">David Howard</text>
<text transform="translate(784.51 1575.20) scale(0.9680 1)" font-size="27.03" fill="#333333">Marian White</text>
<text transform="translate(785.45 1535.00) scale(0.9481 1)" font-size="27.03" fill="#333333">Sharon Carver</text>
<text transform="translate(797.93 1495.70) scale(0.9561 1)" font-size="27.03" fill="#333333">David Laychak</text>
<text transform="translate(1120.08 1605.90) scale(0.9428 1)" font-size="22.97" fill="#333333">13.6%</text>
<text transform="translate(1164.13 1642.50) scale(0.9479 1)" font-size="22.97" fill="#333333">8.1%</text>
<text transform="translate(1176.91 1680.60) scale(0.9522 1)" font-size="22.97" fill="#333333">7.9%</text>
<text transform="translate(1163.11 1714.80) scale(0.9522 1)" font-size="22.97" fill="#333333">6.3%</text>
<text transform="translate(1129.17 1751.40) scale(0.9394 1)" font-size="22.97" fill="#333333">4.5%</text>
<text transform="translate(1042.23 1740.00) scale(0.9556 1)" font-size="22.97" fill="#333333">3.0%</text>
<text transform="translate(1017.61 1705.40) scale(0.9522 1)" font-size="22.97" fill="#333333">2.5%</text>
<text transform="translate(1010.50 1668.00) scale(0.9602 1)" font-size="22.97" fill="#333333">2.4%</text>
<text transform="translate(1025.39 1636.20) scale(0.9681 1)" font-size="22.97" fill="#333333">2.3%</text>
<path d="M1199.6 1853.7L1196.5 1834.8" stroke="#333" stroke-width="1.800"/>
<path d="M972.2 1843.9L982.1 1787.6" stroke="#333" stroke-width="1.800"/>
<path d="M951.8 1804.5L963.6 1761.3" stroke="#333" stroke-width="1.800"/>
<path d="M938.0 1764.0L951.0 1734.5" stroke="#333" stroke-width="1.800"/>
<path d="M929.8 1723.9L943.5 1706.6" stroke="#333" stroke-width="1.800"/>
<path d="M926.2 1684.5L940.0 1678.6" stroke="#333" stroke-width="1.800"/>
<path d="M932.9 1612.6L945.9 1624.4" stroke="#333" stroke-width="1.800"/>
<path d="M942.7 1572.8L954.9 1598.8" stroke="#333" stroke-width="1.800"/>
<path d="M956.5 1533.0L967.1 1576.4" stroke="#333" stroke-width="1.800"/>
<path d="M972.2 1493.8L982.1 1555.5" stroke="#333" stroke-width="1.800"/>
</svg></div>
<div class="panel" style="left:1616px;top:274px;width:1582px;height:533px"><svg width="1582" height="533" viewBox="1616 274 1582 533">
<text transform="translate(1637.73 327.40) scale(0.9436 1)" font-size="30.52" fill="#404040" font-weight="700">Margin Amount Over Time</text>
<rect x="1713.0" y="359.8" width="1459.5" height="2" fill="#e3e3e3"/>
<rect x="1697.0" y="359.8" width="16" height="2" fill="#cdcdcd"/>
<text transform="translate(1658.89 381.20) scale(0.9896 1)" font-size="22.38" fill="#595959">6M</text>
<rect x="1713.0" y="487.7" width="1459.5" height="2" fill="#e3e3e3"/>
<rect x="1697.0" y="487.7" width="16" height="2" fill="#cdcdcd"/>
<text transform="translate(1659.57 496.80) scale(0.9665 1)" font-size="22.38" fill="#595959">4M</text>
<rect x="1713.0" y="615.7" width="1459.5" height="2" fill="#e3e3e3"/>
<rect x="1697.0" y="615.7" width="16" height="2" fill="#cdcdcd"/>
<text transform="translate(1658.89 625.00) scale(0.9896 1)" font-size="22.38" fill="#595959">2M</text>
<rect x="1713.0" y="743.6" width="1459.5" height="2" fill="#e3e3e3"/>
<rect x="1697.0" y="743.6" width="16" height="2" fill="#cdcdcd"/>
<text transform="translate(1676.97 752.80) scale(0.9307 1)" font-size="22.38" fill="#595959">0</text>
<rect x="1712.0" y="359.8" width="2" height="385.8" fill="#cdcdcd"/>
<text transform="translate(1757.92 785.70) scale(0.9568 1)" font-size="22.67" fill="#595959">Jan</text>
<text transform="translate(1877.57 785.70) scale(0.9510 1)" font-size="22.67" fill="#595959">Feb</text>
<text transform="translate(1998.25 785.70) scale(0.9822 1)" font-size="22.67" fill="#595959">Mar</text>
<text transform="translate(2123.17 785.70) scale(0.9506 1)" font-size="22.67" fill="#595959">Apr</text>
<text transform="translate(2239.91 785.70) scale(0.9649 1)" font-size="22.67" fill="#595959">May</text>
<text transform="translate(2365.51 785.70) scale(0.9912 1)" font-size="22.67" fill="#595959">Jun</text>
<text transform="translate(2490.13 785.70) scale(1.0518 1)" font-size="22.67" fill="#595959">Jul</text>
<text transform="translate(2608.23 785.70) scale(0.9308 1)" font-size="22.67" fill="#595959">Aug</text>
<text transform="translate(2729.27 785.70) scale(0.9263 1)" font-size="22.67" fill="#595959">Sep</text>
<text transform="translate(2852.39 785.70) scale(0.9553 1)" font-size="22.67" fill="#595959">Oct</text>
<text transform="translate(2970.83 785.70) scale(0.9731 1)" font-size="22.67" fill="#595959">Nov</text>
<text transform="translate(3093.44 785.70) scale(0.9373 1)" font-size="22.67" fill="#595959">Dec</text>
<rect x="1713" y="743.600" width="1459.500" height="2" fill="#c6c6c6"/>
<path d="M1774.90 558.36C1815.45 541.45 1855.99 524.55 1896.54 505.88C1937.09 487.21 1977.63 446.36 2018.18 446.36C2058.73 446.36 2099.27 594.20 2139.82 594.20C2180.37 594.20 2220.91 552.81 2261.46 531.48C2302.01 510.15 2342.55 466.20 2383.10 466.20C2423.65 466.20 2464.19 592.28 2504.74 592.28C2545.29 592.28 2585.83 516.01 2626.38 492.44C2666.93 468.87 2707.47 450.84 2748.02 450.84C2788.57 450.84 2829.11 531.48 2869.66 531.48C2910.21 531.48 2950.75 475.16 2991.30 475.16C3031.85 475.16 3072.39 494.04 3112.94 512.92L3112.94 745.60L1774.90 745.60Z" fill="#c4a692" fill-opacity="0.3"/>
<path d="M1774.90 558.36C1815.45 541.45 1855.99 524.55 1896.54 505.88C1937.09 487.21 1977.63 446.36 2018.18 446.36C2058.73 446.36 2099.27 594.20 2139.82 594.20C2180.37 594.20 2220.91 552.81 2261.46 531.48C2302.01 510.15 2342.55 466.20 2383.10 466.20C2423.65 466.20 2464.19 592.28 2504.74 592.28C2545.29 592.28 2585.83 516.01 2626.38 492.44C2666.93 468.87 2707.47 450.84 2748.02 450.84C2788.57 450.84 2829.11 531.48 2869.66 531.48C2910.21 531.48 2950.75 475.16 2991.30 475.16C3031.85 475.16 3072.39 494.04 3112.94 512.92" fill="none" stroke="#d0a688" stroke-width="10" stroke-dasharray="10 10"/>
<circle cx="1774.90" cy="558.36" r="6" fill="#d0a688"/>
<circle cx="1896.54" cy="505.88" r="6" fill="#d0a688"/>
<circle cx="2018.18" cy="446.36" r="6" fill="#d0a688"/>
<circle cx="2139.82" cy="594.20" r="6" fill="#d0a688"/>
<circle cx="2261.46" cy="531.48" r="6" fill="#d0a688"/>
<circle cx="2383.10" cy="466.20" r="6" fill="#d0a688"/>
<circle cx="2504.74" cy="592.28" r="6" fill="#d0a688"/>
<circle cx="2626.38" cy="492.44" r="6" fill="#d0a688"/>
<circle cx="2748.02" cy="450.84" r="6" fill="#d0a688"/>
<circle cx="2869.66" cy="531.48" r="6" fill="#d0a688"/>
<circle cx="2991.30" cy="475.16" r="6" fill="#d0a688"/>
<circle cx="3112.94" cy="512.92" r="6" fill="#d0a688"/>
<path d="M1774.90 548.12C1815.45 531.80 1855.99 515.48 1896.54 511.64C1937.09 507.80 1977.63 505.88 2018.18 505.88C2058.73 505.88 2099.27 510.68 2139.82 514.20C2180.37 517.72 2220.91 523.80 2261.46 527.00C2302.01 530.20 2342.55 533.40 2383.10 533.40C2423.65 533.40 2464.19 533.19 2504.74 532.76C2545.29 532.33 2585.83 523.37 2626.38 517.40C2666.93 511.43 2707.47 502.79 2748.02 496.92C2788.57 491.05 2829.11 482.20 2869.66 482.20C2910.21 482.20 2950.75 482.41 2991.30 482.84C3031.85 483.27 3072.39 500.33 3112.94 517.40" fill="none" stroke="#b3415a" stroke-width="4" stroke-dasharray="16 8"/>
<text transform="translate(1745.01 590.76) scale(0.9988 1)" font-size="21.80" fill="#595959">2.91M</text>
<text transform="translate(1834.98 491.88) scale(0.9932 1)" font-size="21.80" fill="#595959">3.73M</text>
<text transform="translate(1988.95 432.36) scale(0.9876 1)" font-size="21.80" fill="#595959">4.66M</text>
<text transform="translate(2109.93 626.60) scale(0.9988 1)" font-size="21.80" fill="#595959">2.35M</text>
<text transform="translate(2199.90 517.48) scale(0.9932 1)" font-size="21.80" fill="#595959">3.33M</text>
<text transform="translate(2353.87 452.20) scale(0.9876 1)" font-size="21.80" fill="#595959">4.35M</text>
<text transform="translate(2474.85 624.68) scale(0.9988 1)" font-size="21.80" fill="#595959">2.38M</text>
<text transform="translate(2564.82 478.44) scale(0.9932 1)" font-size="21.80" fill="#595959">3.94M</text>
<text transform="translate(2718.79 436.84) scale(0.9876 1)" font-size="21.80" fill="#595959">4.59M</text>
<text transform="translate(2840.10 563.88) scale(0.9932 1)" font-size="21.80" fill="#595959">3.33M</text>
<text transform="translate(2962.07 461.16) scale(0.9876 1)" font-size="21.80" fill="#595959">4.21M</text>
<text transform="translate(3083.38 545.32) scale(0.9932 1)" font-size="21.80" fill="#595959">3.62M</text>
</svg></div>
<div class="panel" style="left:1616px;top:823px;width:1582px;height:532px"><svg width="1582" height="532" viewBox="1616 823 1582 532">
<text transform="translate(1638.75 876.70) scale(0.9244 1)" font-size="30.52" fill="#404040" font-weight="700">Sales Over Time</text>
<rect x="1725.2" y="908.6" width="1447.3" height="2" fill="#e3e3e3"/>
<rect x="1709.2" y="908.6" width="16" height="2" fill="#cdcdcd"/>
<text transform="translate(1659.01 930.40) scale(0.9774 1)" font-size="22.38" fill="#595959">20M</text>
<rect x="1725.2" y="1100.9" width="1447.3" height="2" fill="#e3e3e3"/>
<rect x="1709.2" y="1100.9" width="16" height="2" fill="#cdcdcd"/>
<text transform="translate(1659.27 1110.10) scale(0.9711 1)" font-size="22.38" fill="#595959">10M</text>
<rect x="1725.2" y="1293.0" width="1447.3" height="2" fill="#e3e3e3"/>
<rect x="1709.2" y="1293.0" width="16" height="2" fill="#cdcdcd"/>
<text transform="translate(1688.87 1302.00) scale(0.9307 1)" font-size="22.38" fill="#595959">0</text>
<rect x="1724.2" y="908.6" width="2" height="386.4" fill="#cdcdcd"/>
<text transform="translate(1769.42 1335.00) scale(0.9568 1)" font-size="22.67" fill="#595959">Jan</text>
<text transform="translate(1888.03 1335.00) scale(0.9510 1)" font-size="22.67" fill="#595959">Feb</text>
<text transform="translate(2007.67 1335.00) scale(0.9822 1)" font-size="22.67" fill="#595959">Mar</text>
<text transform="translate(2131.55 1335.00) scale(0.9506 1)" font-size="22.67" fill="#595959">Apr</text>
<text transform="translate(2247.25 1335.00) scale(0.9649 1)" font-size="22.67" fill="#595959">May</text>
<text transform="translate(2371.81 1335.00) scale(0.9912 1)" font-size="22.67" fill="#595959">Jun</text>
<text transform="translate(2495.39 1335.00) scale(1.0518 1)" font-size="22.67" fill="#595959">Jul</text>
<text transform="translate(2612.45 1335.00) scale(0.9308 1)" font-size="22.67" fill="#595959">Aug</text>
<text transform="translate(2732.45 1335.00) scale(0.9263 1)" font-size="22.67" fill="#595959">Sep</text>
<text transform="translate(2854.53 1335.00) scale(0.9553 1)" font-size="22.67" fill="#595959">Oct</text>
<text transform="translate(2971.93 1335.00) scale(0.9731 1)" font-size="22.67" fill="#595959">Nov</text>
<text transform="translate(3093.50 1335.00) scale(0.9373 1)" font-size="22.67" fill="#595959">Dec</text>
<rect x="1725.200" y="1293" width="1447.300" height="2" fill="#c6c6c6"/>
<path d="M1786.40 1161.65C1826.60 1154.29 1866.80 1146.92 1907.00 1136.10C1947.20 1125.28 1987.40 1096.72 2027.60 1096.72C2067.80 1096.72 2108.00 1189.70 2148.20 1189.70C2188.40 1189.70 2228.60 1163.16 2268.80 1149.16C2309.00 1135.17 2349.20 1105.75 2389.40 1105.75C2429.60 1105.75 2469.80 1188.74 2510.00 1188.74C2550.20 1188.74 2590.40 1139.21 2630.60 1124.19C2670.80 1109.18 2711.00 1098.64 2751.20 1098.64C2791.40 1098.64 2831.60 1143.79 2871.80 1143.79C2912.00 1143.79 2952.20 1106.52 2992.40 1106.52C3032.60 1106.52 3072.80 1120.35 3113.00 1134.18L3113.00 1295.20L1786.40 1295.20Z" fill="#3b5c51" fill-opacity="0.3"/>
<path d="M1786.40 1161.65C1826.60 1154.29 1866.80 1146.92 1907.00 1136.10C1947.20 1125.28 1987.40 1096.72 2027.60 1096.72C2067.80 1096.72 2108.00 1189.70 2148.20 1189.70C2188.40 1189.70 2228.60 1163.16 2268.80 1149.16C2309.00 1135.17 2349.20 1105.75 2389.40 1105.75C2429.60 1105.75 2469.80 1188.74 2510.00 1188.74C2550.20 1188.74 2590.40 1139.21 2630.60 1124.19C2670.80 1109.18 2711.00 1098.64 2751.20 1098.64C2791.40 1098.64 2831.60 1143.79 2871.80 1143.79C2912.00 1143.79 2952.20 1106.52 2992.40 1106.52C3032.60 1106.52 3072.80 1120.35 3113.00 1134.18" fill="none" stroke="#3b5c51" stroke-width="10" stroke-dasharray="10 10"/>
<circle cx="1786.40" cy="1161.65" r="6" fill="#3b5c51"/>
<circle cx="1907.00" cy="1136.10" r="6" fill="#3b5c51"/>
<circle cx="2027.60" cy="1096.72" r="6" fill="#3b5c51"/>
<circle cx="2148.20" cy="1189.70" r="6" fill="#3b5c51"/>
<circle cx="2268.80" cy="1149.16" r="6" fill="#3b5c51"/>
<circle cx="2389.40" cy="1105.75" r="6" fill="#3b5c51"/>
<circle cx="2510.00" cy="1188.74" r="6" fill="#3b5c51"/>
<circle cx="2630.60" cy="1124.19" r="6" fill="#3b5c51"/>
<circle cx="2751.20" cy="1098.64" r="6" fill="#3b5c51"/>
<circle cx="2871.80" cy="1143.79" r="6" fill="#3b5c51"/>
<circle cx="2992.40" cy="1106.52" r="6" fill="#3b5c51"/>
<circle cx="3113.00" cy="1134.18" r="6" fill="#3b5c51"/>
<text transform="translate(1762.30 1147.45) scale(1.0095 1)" font-size="21.80" fill="#595959">6.9M</text>
<text transform="translate(1845.44 1121.90) scale(0.9916 1)" font-size="21.80" fill="#595959">8.23M</text>
<text transform="translate(1991.26 1082.52) scale(1.0010 1)" font-size="21.80" fill="#595959">10.28M</text>
<text transform="translate(2118.64 1221.90) scale(0.9916 1)" font-size="21.80" fill="#595959">5.44M</text>
<text transform="translate(2207.01 1134.96) scale(0.9954 1)" font-size="21.80" fill="#595959">7.55M</text>
<text transform="translate(2359.73 1091.55) scale(0.9935 1)" font-size="21.80" fill="#595959">9.81M</text>
<text transform="translate(2480.44 1220.94) scale(0.9916 1)" font-size="21.80" fill="#595959">5.49M</text>
<text transform="translate(2601.04 1109.99) scale(0.9916 1)" font-size="21.80" fill="#595959">8.85M</text>
<text transform="translate(2714.86 1084.44) scale(1.0010 1)" font-size="21.80" fill="#595959">10.18M</text>
<text transform="translate(2842.01 1175.99) scale(0.9954 1)" font-size="21.80" fill="#595959">7.83M</text>
<text transform="translate(2962.73 1092.32) scale(0.9935 1)" font-size="21.80" fill="#595959">9.77M</text>
<text transform="translate(3083.44 1119.98) scale(0.9916 1)" font-size="21.80" fill="#595959">8.33M</text>
</svg></div>
<div class="panel" style="left:1616px;top:1371px;width:1582px;height:533px"><svg width="1582" height="533" viewBox="1616 1371 1582 533">
<text transform="translate(1637.74 1424.10) scale(0.9381 1)" font-size="30.52" fill="#404040" font-weight="700">Budget Over Time</text>
<rect x="1725.2" y="1456.8" width="1447.3" height="2" fill="#e3e3e3"/>
<rect x="1709.2" y="1456.8" width="16" height="2" fill="#cdcdcd"/>
<text transform="translate(1659.23 1478.60) scale(0.9721 1)" font-size="22.38" fill="#595959">53M</text>
<rect x="1725.2" y="1648.7" width="1447.3" height="2" fill="#e3e3e3"/>
<rect x="1709.2" y="1648.7" width="16" height="2" fill="#cdcdcd"/>
<text transform="translate(1659.23 1658.30) scale(0.9721 1)" font-size="22.38" fill="#595959">52M</text>
<rect x="1725.2" y="1840.6" width="1447.3" height="2" fill="#e3e3e3"/>
<rect x="1709.2" y="1840.6" width="16" height="2" fill="#cdcdcd"/>
<text transform="translate(1659.23 1850.60) scale(0.9721 1)" font-size="22.38" fill="#595959">51M</text>
<rect x="1724.2" y="1456.8" width="2" height="385.8" fill="#cdcdcd"/>
<text transform="translate(1769.42 1882.40) scale(0.9568 1)" font-size="22.67" fill="#595959">Jan</text>
<text transform="translate(1888.03 1882.40) scale(0.9510 1)" font-size="22.67" fill="#595959">Feb</text>
<text transform="translate(2007.67 1882.40) scale(0.9822 1)" font-size="22.67" fill="#595959">Mar</text>
<text transform="translate(2131.55 1882.40) scale(0.9506 1)" font-size="22.67" fill="#595959">Apr</text>
<text transform="translate(2247.25 1882.40) scale(0.9649 1)" font-size="22.67" fill="#595959">May</text>
<text transform="translate(2371.81 1882.40) scale(0.9912 1)" font-size="22.67" fill="#595959">Jun</text>
<text transform="translate(2495.39 1882.40) scale(1.0518 1)" font-size="22.67" fill="#595959">Jul</text>
<text transform="translate(2612.45 1882.40) scale(0.9308 1)" font-size="22.67" fill="#595959">Aug</text>
<text transform="translate(2732.45 1882.40) scale(0.9263 1)" font-size="22.67" fill="#595959">Sep</text>
<text transform="translate(2854.53 1882.40) scale(0.9553 1)" font-size="22.67" fill="#595959">Oct</text>
<text transform="translate(2971.93 1882.40) scale(0.9731 1)" font-size="22.67" fill="#595959">Nov</text>
<text transform="translate(3093.50 1882.40) scale(0.9373 1)" font-size="22.67" fill="#595959">Dec</text>
<path d="M1786.40 1723.77C1826.60 1714.59 1866.80 1705.41 1907.00 1693.45C1947.20 1681.49 1987.40 1652.00 2027.60 1652.00C2067.80 1652.00 2108.00 1747.57 2148.20 1747.57C2188.40 1747.57 2228.60 1663.13 2268.80 1663.13C2309.00 1663.13 2349.20 1666.46 2389.40 1673.11C2429.60 1679.76 2469.80 1750.06 2510.00 1750.06C2550.20 1750.06 2590.40 1692.17 2630.60 1674.84C2670.80 1657.50 2711.00 1646.05 2751.20 1646.05C2791.40 1646.05 2831.60 1826.06 2871.80 1826.06C2912.00 1826.06 2952.20 1728.00 2992.40 1722.62C3032.60 1717.25 3072.80 1715.91 3113.00 1714.56" fill="none" stroke="#455967" stroke-width="10" stroke-dasharray="10 10"/>
</svg></div>
<svg width="6" height="16" viewBox="0 1894 6 16" style="left:0;top:1894px"><path d="M0 1896Q.600 1905 2.600 1910H0z" fill="#111"/></svg>
</div></body></html>
